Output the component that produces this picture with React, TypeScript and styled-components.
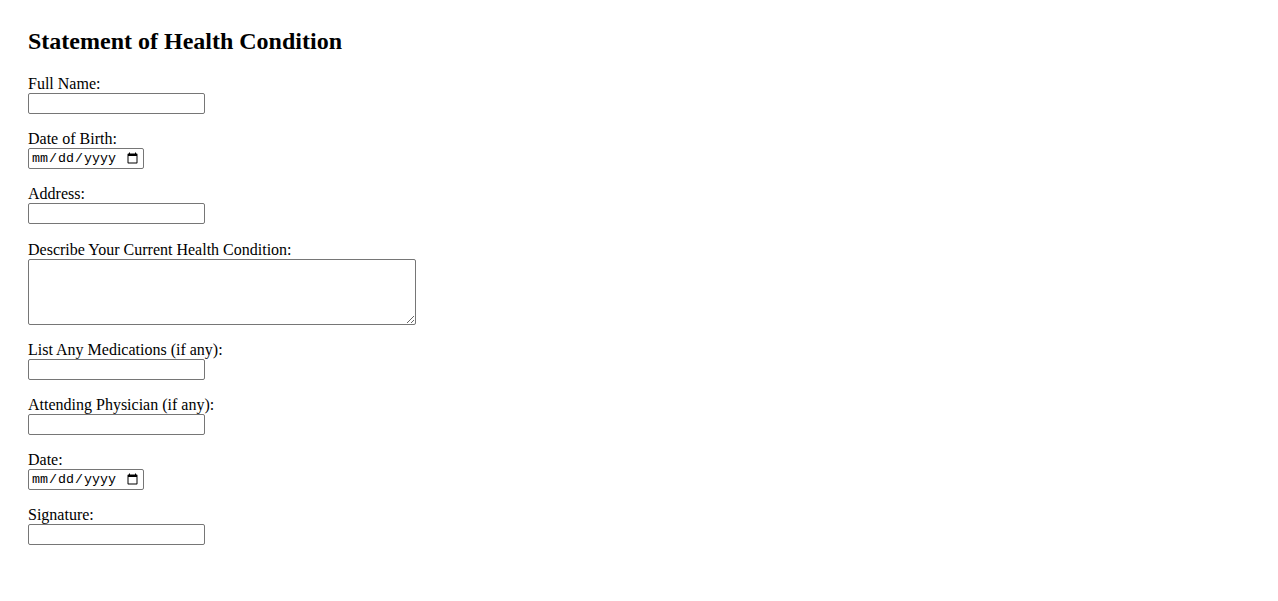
import React from "react";
import styled, { createGlobalStyle } from "styled-components";

const Global = createGlobalStyle`
  html, body { background: #ffffff; }
  body {
    margin: 8px;
    font-family: "Liberation Serif", "Times New Roman", serif;
    font-size: 16px;
    color: #000000;
  }
`;

const Page = styled.div`
  padding: 20px;
`;

const Title = styled.h2`
  margin: 0 0 18.6px 0;
  font-size: 24px;
  font-weight: bold;
  line-height: 27.6px;
`;

const Form = styled.form`
  display: flex;
  flex-direction: column;
  align-items: flex-start;
`;

const Field = styled.div`
  display: flex;
  flex-direction: column;
  align-items: flex-start;
  margin-bottom: 15.14px;
`;

const Label = styled.label`
  display: block;
  line-height: 19px;
  height: 19px;
`;

const TextInput = styled.input`
  box-sizing: border-box;
  width: 177px;
  height: 21px;
  margin: 0;
  padding: 1px 2px;
  border: 1px solid #767676;
  border-radius: 2px;
  font-family: "Liberation Sans", Arial, sans-serif;
  font-size: 13.33px;
  background: #fff;
`;

const DateInput = styled.input`
  box-sizing: border-box;
  width: 116px;
  height: 21px;
  margin: 0;
  padding: 1px 2px;
  border: 1px solid #767676;
  border-radius: 2px;
  font-family: "Liberation Mono", "DejaVu Sans Mono", monospace;
  font-size: 13.33px;
  background: #fff;
`;

const TextArea = styled.textarea`
  box-sizing: border-box;
  width: 388px;
  height: 66px;
  margin: 0;
  padding: 2px;
  border: 1px solid #767676;
  border-radius: 2px;
  font-family: "Liberation Mono", monospace;
  font-size: 13.33px;
  background: #fff;
`;

const fields: { id: string; label: string; kind: "text" | "date" | "area" }[] = [
  { id: "name", label: "Full Name:", kind: "text" },
  { id: "dob", label: "Date of Birth:", kind: "date" },
  { id: "address", label: "Address:", kind: "text" },
  { id: "condition", label: "Describe Your Current Health Condition:", kind: "area" },
  { id: "meds", label: "List Any Medications (if any):", kind: "text" },
  { id: "physician", label: "Attending Physician (if any):", kind: "text" },
  { id: "date", label: "Date:", kind: "date" },
  { id: "signature", label: "Signature:", kind: "text" },
];

export default function App() {
  return (
    <>
      <Global />
      <Page>
        <Title>Statement of Health Condition</Title>
        <Form onSubmit={(e) => e.preventDefault()}>
          {fields.map((f) => (
            <Field key={f.id}>
              <Label htmlFor={f.id}>{f.label}</Label>
              {f.kind === "text" && <TextInput id={f.id} type="text" />}
              {f.kind === "date" && <DateInput id={f.id} type="date" />}
              {f.kind === "area" && <TextArea id={f.id} />}
            </Field>
          ))}
        </Form>
      </Page>
    </>
  );
}
